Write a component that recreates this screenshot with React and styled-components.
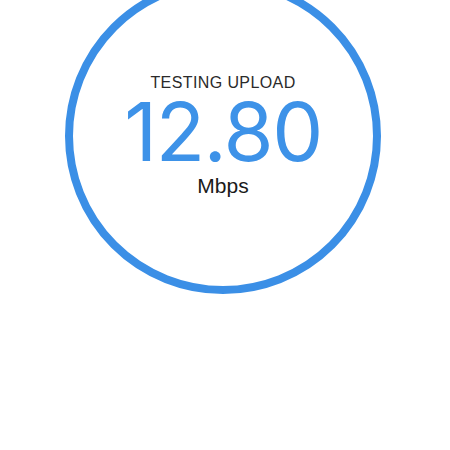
import React from "react";
import styled, { createGlobalStyle } from "styled-components";

const GlobalStyle = createGlobalStyle`
  html, body {
    margin: 0;
    padding: 0;
    background: #ffffff;
  }
  body {
    width: 450px;
    height: 450px;
    overflow: hidden;
    font-family: "Liberation Sans", Arial, sans-serif;
  }
`;

const Screen = styled.div`
  width: 450px;
  height: 450px;
  background: #ffffff;
  overflow: hidden;
`;

const Gauge = styled.div`
  box-sizing: border-box;
  width: 316px;
  height: 316px;
  margin: -22px 0 0 65px;
  border: 8px solid #3b8fe6;
  border-radius: 50%;
  display: flex;
  flex-direction: column;
  align-items: center;
  padding-top: 89px;
`;

const Label = styled.div`
  font-family: "Liberation Sans", Arial, sans-serif;
  font-size: 16px;
  line-height: 1;
  letter-spacing: 0.4px;
  color: #2a2a2a;
  text-transform: uppercase;
`;

const Value = styled.div`
  font-family: Inter, Roboto, "Liberation Sans", sans-serif;
  font-weight: 400;
  font-size: 81px;
  line-height: 0.8;
  letter-spacing: -1.5px;
  color: #3d92e8;
  margin-top: 9px;
`;

const Unit = styled.div`
  font-family: "Liberation Sans", Arial, sans-serif;
  font-size: 21px;
  line-height: 1;
  color: #1a1a1a;
  margin-top: 10px;
`;

export default function App() {
  return (
    <>
      <GlobalStyle />
      <Screen>
        <Gauge>
          <Label>Testing Upload</Label>
          <Value>12.80</Value>
          <Unit>Mbps</Unit>
        </Gauge>
      </Screen>
    </>
  );
}
